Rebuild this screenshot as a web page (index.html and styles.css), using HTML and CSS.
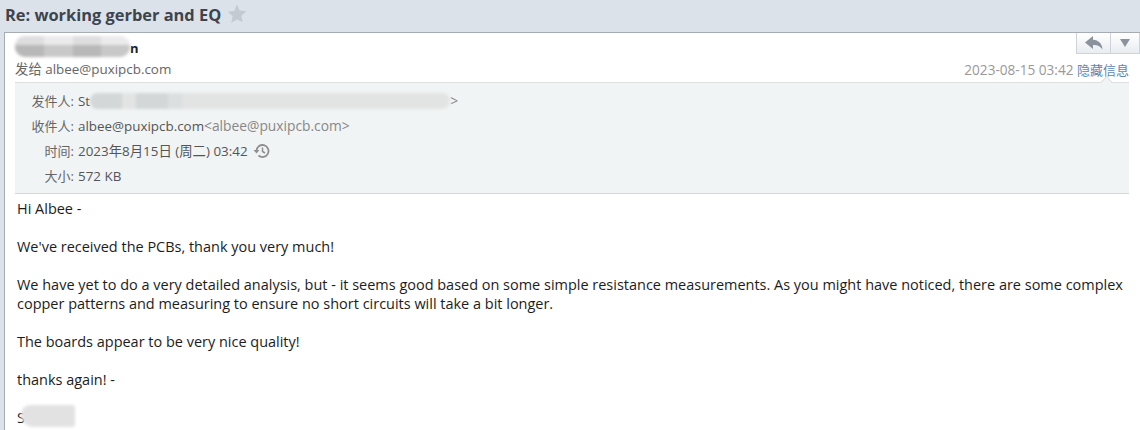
FILE: index.html
```html
<!DOCTYPE html>
<html>
<head>
  <meta charset="utf-8">
  <title>Re: working gerber and EQ</title>
  <link rel="stylesheet" href="styles.css">
</head>
<body>
  <div class="subject">
    <h1>Re: working gerber and EQ</h1>
    <svg class="star" width="20" height="19" viewBox="0 0 20 19"><path d="M10 0.5l2.7 6.1 6.6.7-5 4.4 1.4 6.5L10 15.4l-5.7 3.3 1.4-6.5-5-4.4 6.6-.7z"/></svg>
  </div>

  <div class="mail">
    <div class="actions">
      <span class="action reply">
        <svg width="18" height="14" viewBox="0 0 18 14"><path d="M8 0L0 6.5 8 13V9c4-.3 7 .8 9.500 4.500C17 7.500 13.500 4.200 8 3.800z"/></svg>
      </span>
      <span class="action more">
        <svg width="10" height="8" viewBox="0 0 10 8"><path d="M0 0h10L5 8z"/></svg>
      </span>
    </div>

    <div class="head">
      <div class="sender">
        <span class="mask mask-sender"><i></i><i></i><i></i><i></i></span><b>n</b>
      </div>
      <div class="line2">
        <span class="to">发给 albee@puxipcb.com</span>
        <span class="when">2023-08-15 03:42 <a href="#">隐藏信息</a></span>
      </div>
    </div>

    <div class="details">
      <span class="notch"></span>
      <div class="row"><label>发件人:</label><span class="val">St<span class="mask mask-from"><i></i><i></i><i></i><i></i><i></i><i></i></span><span class="dim">&gt;</span></span></div>
      <div class="row"><label>收件人:</label><span class="val">albee@puxipcb.com<span class="dim">&lt;albee@puxipcb.com&gt;</span></span></div>
      <div class="row"><label>时间:</label><span class="val">2023年8月15日 (周二) 03:42
        <svg class="history" width="17" height="16" viewBox="0 0 17 16"><path d="M3.500 8a6 6 0 1 1 2 4.500" fill="none" stroke-width="1.800"/><path class="fill" d="M0.500 7h6l-3 3.500z"/><path d="M9.500 4.500V8.500l2.500 1.500" fill="none" stroke-width="1.500"/></svg>
      </span></div>
      <div class="row"><label>大小:</label><span class="val">572 KB</span></div>
    </div>

    <div class="body">
      <p>Hi Albee -</p>
      <p>We've received the PCBs, thank you very much!</p>
      <p>We have yet to do a very detailed analysis, but - it seems good based on some simple resistance measurements. As you might have noticed, there are some complex copper patterns and measuring to ensure no short circuits will take a bit longer.</p>
      <p>The boards appear to be very nice quality!</p>
      <p>thanks again! -</p>
      <p class="sign">S<span class="mask mask-sign"><i></i><i></i><i></i></span></p>
    </div>
  </div>
</body>
</html>
```

FILE: styles.css
```css
html, body {
  margin: 0;
  height: 430px;
  overflow: hidden;
}

body {
  background-color: #dce2ea;
  font-family: "Open Sans", "Noto Sans CJK SC", sans-serif;
  font-size: 13px;
  color: #555;
}

.subject {
  height: 32px;
  display: flex;
  align-items: center;
  padding-left: 5px;
}

.subject h1 {
  margin: 0 0 3px 0;
  font-size: 16.4px;
  line-height: 24px;
  font-weight: 700;
  color: #3d444e;
}

.star {
  margin: 0 0 5px 6px;
  fill: #c4cad2;
}

.mail {
  position: relative;
  height: 398px;
  margin-left: 4px;
  background-color: #fff;
  border: 1px solid #a6acb4;
  border-width: 1px 0 0 1px;
}

/* reply buttons hang off the top right corner */
.actions {
  position: absolute;
  top: 0;
  right: 0;
  width: 64px;
  height: 21px;
  display: flex;
  border: 1px solid #cdd3d9;
  border-top: 0;
  box-sizing: border-box;
  background: linear-gradient(#fff, #e9edf0);
}

.action {
  display: flex;
  align-items: center;
  justify-content: center;
}

.reply {
  width: 33px;
  border-right: 1px solid #cdd3d9;
}

.more {
  flex: 1;
}

.action svg {
  fill: #8b929b;
}

.head {
  padding: 5px 11px 0 10px;
}

.sender {
  height: 21px;
  line-height: 20px;
  color: #222;
}

.sender b {
  font-size: 13px;
}

.line2 {
  display: flex;
  justify-content: space-between;
  height: 23px;
  line-height: 21px;
  font-size: 13.4px;
  color: #666;
}

.when {
  color: #999;
  font-size: 13.6px;
}

.when a {
  color: #5d87b3;
  font-size: 13px;
  text-decoration: none;
}

.details {
  position: relative;
  margin: 0 11px 0 10px;
  height: 112px;
  box-sizing: border-box;
  padding-top: 6px;
  background-color: #f1f4f4;
  border-top: 1px solid #dcdfdf;
  border-bottom: 1px solid #d4d8d8;
}

.notch {
  position: absolute;
  top: -5px;
  right: 18px;
  width: 8px;
  height: 8px;
  background-color: #f1f4f4;
  border: 1px solid #dcdfdf;
  border-width: 1px 0 0 1px;
  transform: rotate(45deg);
}

.row {
  display: flex;
  height: 25px;
  line-height: 24px;
}

.row label {
  width: 59px;
  flex: none;
  text-align: right;
  color: #666;
}

.val {
  margin-left: 4px;
  font-size: 13.4px;
  color: #555;
  white-space: nowrap;
}

.dim {
  font-size: 13.8px;
  color: #888;
}

.history {
  margin-left: 2px;
  vertical-align: -3px;
  stroke: #8f8f8f;
}

.history .fill {
  fill: #8f8f8f;
  stroke: none;
}

.body {
  padding: 5px 12px 0 12px;
  font-size: 14.47px;
  line-height: 19px;
  color: #1c1c1c;
}

.body p {
  margin: 0 0 19px 0;
}

/* pixelated blur painted over redacted names */
.mask {
  display: inline-flex;
  filter: blur(1.5px);
  vertical-align: middle;
  overflow: hidden;
}

.mask i {
  display: block;
  height: 100%;
}

.mask-sender {
  width: 115px;
  height: 21px;
  margin-top: -6px;
  background-color: #ddd;
  border-radius: 10px;
}

.mask-sender i {
  flex: 1;
  background: linear-gradient(#dedede 45%, #b8b8b8 45%);
}

.mask-sender i:nth-child(2n) {
  background: linear-gradient(#ebebeb 45%, #c8c8c8 45%);
}

.mask-from {
  width: 360px;
  height: 16px;
  border-radius: 8px;
  background-color: #e2e4e4;
  margin-top: -2px;
}

.mask-from i:nth-child(1), .mask-from i:nth-child(3) {
  width: 32px;
  background-color: #d4d7d7;
}

.mask-from i:nth-child(2) {
  width: 14px;
}

.mask-from i:nth-child(4) {
  width: 14px;
  background-color: #dcdfdf;
}

.sign {
  position: relative;
  margin-top: -2px;
  color: #222;
}

.mask-sign {
  position: absolute;
  left: 4px;
  top: -3px;
  width: 54px;
  height: 22px;
  background-color: #e2e2e2;
  border-radius: 10px 3px 3px 14px;
}
```
